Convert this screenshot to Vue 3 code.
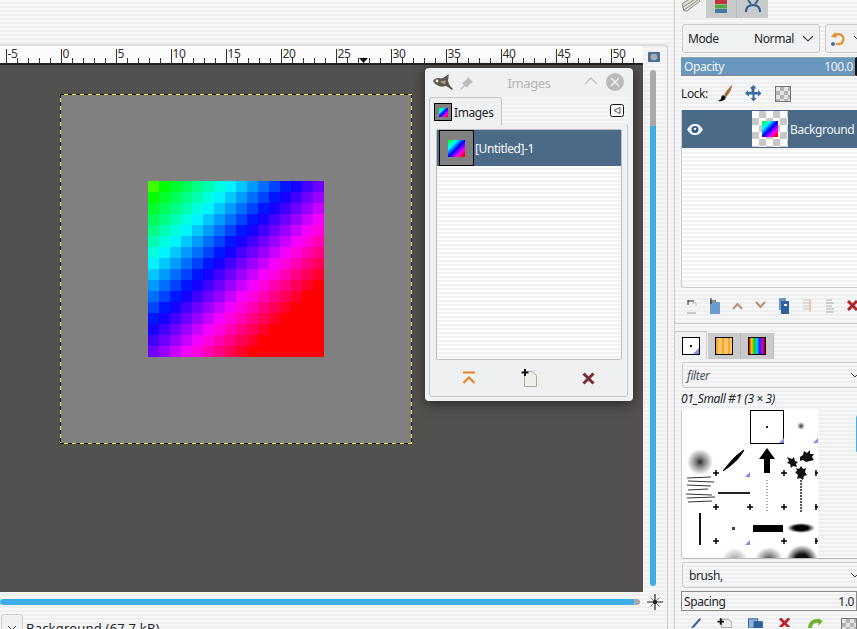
<script setup>
const pixels = []
for (let y = 0; y < 16; y++) {
  for (let x = 0; x < 16; x++) {
    const s = x + y
    const h = s === 0 ? 105 : 120 + (s - 1) * 10.43
    pixels.push(`hsl(${Math.min(h, 360)} 100% 50%)`)
  }
}
const ruler = []
for (let u = -6; u < 53; u++) {
  ruler.push({ u, major: u % 5 === 0 })
}
</script>

<template>
  <div class="app">
    <section class="main">
      <div class="topstrip"></div>
      <div class="work">
        <div class="ruler">
          <div v-for="r in ruler" :key="r.u" class="tick" :class="{ major: r.major }">
            <span v-if="r.major">{{ r.u }}</span>
          </div>
          <svg class="rulermark" width="9" height="5" viewBox="0 0 9 5"><path d="M0 0h9L4.500 5z" fill="#111"/></svg>
        </div>
        <div class="rulercorner">
          <svg width="12" height="10" viewBox="0 0 12 10"><rect width="12" height="10" rx="1" fill="#4d6f94"/><circle cx="6" cy="5" r="3.300" fill="#a9aeb3"/></svg>
        </div>
        <div class="canvas">
          <div class="layer">
            <div class="art">
              <i v-for="(c, i) in pixels" :key="i" :style="{ background: c }"></i>
            </div>
          </div>
        </div>
        <div class="vscroll"><div class="vthumb"></div></div>
        <div class="hscroll"><div class="hthumb"></div></div>
        <div class="nav">
          <svg width="16" height="16" viewBox="0 0 16 16" fill="none" stroke="#222"><path d="M8 0v16M0 8h16" stroke-width="1.200"/><path d="M3.500 3.500l9 9M12.500 3.500l-9 9" stroke="#777"/><path d="M6 8l2-2 2 2-2 2z" fill="#222"/></svg>
        </div>
      </div>
      <div class="status">
        <div class="statusbtn"><svg width="10" height="6" viewBox="0 0 10 6" fill="none" stroke="#444"><path d="M1 1l4 4 4-4"/></svg></div>
        <span>Background (67.7 kB)</span>
      </div>
      <!-- floating dock window -->
      <div class="win">
        <div class="wintitle">
          <svg class="wilber" width="20" height="16" viewBox="0 0 20 16"><path d="M0 7c1-2 3-3 5-3 2 0 3 1 5 0 2-1 4-3 6-4-1 2 0 4-1 6 0 3 2 6 5 9l-1 1c-3-2-5-4-7-4-2 1-4 1-6 0C3 11 1 9 0 7z" fill="#5b5850"/><circle cx="4" cy="7" r="1.400" fill="#eee"/><path d="M7 7c2 0 4 0 6-1l-1 4c-2 0-4-1-5-3z" fill="#b49a70"/></svg>
          <svg class="pin" width="14" height="14" viewBox="0 0 14 14"><path d="M8 1l5 5-2 1-3 3-1 2-2-2-4 4-1-1 4-4-2-2 2-1 3-3z" fill="#bbbcbd"/></svg>
          <span class="wintitletext">Images</span>
          <svg class="winup" width="14" height="8" viewBox="0 0 14 8" fill="none" stroke="#c2c3c4" stroke-width="1.300"><path d="M1 7l6-6 6 6"/></svg>
          <div class="winclose"><svg width="10" height="10" viewBox="0 0 10 10" stroke="#eff0f1" stroke-width="1.500"><path d="M1 1l8 8M9 1l-8 8"/></svg></div>
        </div>
        <div class="wintabs">
          <div class="wintab">
            <div class="thumb tinythumb"><b></b></div>
            <span>Images</span>
          </div>
          <div class="wincfg"><svg width="14" height="13" viewBox="0 0 14 13"><rect x=".5" y=".5" width="13" height="12" rx="2" fill="#fff" stroke="#111"/><path d="M4 6.500L10 3.500v6z" fill="#fff" stroke="#555"/></svg></div>
        </div>
        <div class="winpanel">
          <div class="winlist">
            <div class="imgrow">
              <div class="thumb bigthumb"><b></b></div>
              <span>[Untitled]-1</span>
            </div>
          </div>
          <div class="winbtns">
            <svg width="14" height="14" viewBox="0 0 14 14" fill="none" stroke="#e67e22" stroke-width="2"><path d="M1 1.500h12"/><path d="M1.500 12L7 6.500 12.500 12"/></svg>
            <svg width="16" height="18" viewBox="0 0 16 18"><path d="M3.500 2.500h8l4 4v11h-12z" fill="#eeeeea" stroke="#a9a9a9"/><path d="M4 0v7M0.500 3.500h7" stroke="#111" stroke-width="2"/></svg>
            <svg width="13" height="13" viewBox="0 0 13 13" stroke="#7b2d33" stroke-width="3"><path d="M1.500 1.500l10 10M11.500 1.500l-10 10"/></svg>
          </div>
        </div>
      </div>
    </section>

    <aside class="dock">
      <div class="docktabs">
        <div class="dtab dtab-active">
          <svg width="20" height="18" viewBox="0 0 20 18"><path d="M1 9L15 0l4 6-13 10H3z" fill="#e0e0da" stroke="#8f8f86"/><path d="M2 12l14-9M3 15l14-10" stroke="#8f8f86" fill="none"/></svg>
        </div>
        <div class="dtab dtab-a">
          <svg width="12" height="14" viewBox="0 0 12 14"><rect width="12" height="4" y="0" fill="#c4333a"/><rect width="12" height="4" y="4.500" fill="#56a63d"/><rect width="12" height="4" y="9" fill="#4a7ba8"/></svg>
        </div>
        <div class="dtab dtab-b">
          <svg width="16" height="12" viewBox="0 0 16 12" fill="none" stroke="#2f5e8c" stroke-width="2"><path d="M1 12c0-5 3-7 7-7s7 2 7 7"/><path d="M3 0l3 4M13 0l-3 4"/></svg>
        </div>
      </div>
      <div class="modes">
        <div class="combo mode"><span>Mode</span><span class="modeval">Normal</span><svg width="12" height="7" viewBox="0 0 12 7" fill="none" stroke="#444" stroke-width="1.100"><path d="M1 1l5 5 5-5"/></svg></div>
        <div class="combo undo">
          <svg width="17" height="16" viewBox="0 0 17 16" fill="none"><path d="M4.500 5a5 5 0 1 1 1.500 7.500" stroke="#e8912b" stroke-width="2.400"/><path d="M1 5.500l4.500-4.500 1 6z" fill="#e8912b"/><circle cx="3" cy="13" r="2" fill="#3a6ea5"/></svg>
          <svg width="10" height="7" viewBox="0 0 10 7" fill="none" stroke="#444"><path d="M1 1l4 4 4-4"/></svg>
        </div>
      </div>
      <div class="opacity"><span>Opacity</span><span>100.0</span></div>
      <div class="lock">
        <span>Lock:</span>
        <svg width="16" height="17" viewBox="0 0 16 17"><path d="M15 0c-2 2-6 6-8 10l2 2c3-3 6-8 6-12z" fill="#a56a3a"/><path d="M6 10c-2 1-2 3-2 4l-3 2c3 1 7 0 8-4z" fill="#111"/></svg>
        <svg width="17" height="17" viewBox="0 0 17 17" fill="#3c6a9a"><path d="M8.500 0l3 3.500h-2v3.500h3.500v-2l3.500 3.500-3.500 3v-2h-3.500v3.500h2l-3 3.500-3-3.500h2v-3.500h-3.500v2L0 8.500l3-3.500v2h3.500V3.500h-2z"/></svg>
        <div class="lockchk"></div>
      </div>
      <div class="layers">
        <div class="layerrow">
          <svg width="16" height="11" viewBox="0 0 16 11"><path d="M0 5.500C3 1 5 0 8 0s5 1 8 5.500C13 10 11 11 8 11S3 10 0 5.500z" fill="#f4f6f8"/><circle cx="8" cy="5.500" r="3.500" fill="#2a568c"/><circle cx="8" cy="5" r="1.300" fill="#fff"/></svg>
          <div class="layerthumb"><b></b></div>
          <span>Background</span>
        </div>
      </div>
      <div class="layerbtns">
        <svg width="10" height="16" viewBox="0 0 10 16" fill="none"><path d="M1 2v5M1 3h6" stroke="#222"/><path d="M5 5h4v3" stroke="#bbb"/><path d="M0 15h9" stroke="#999"/></svg>
        <svg width="10" height="16" viewBox="0 0 10 16"><rect y="4" width="10" height="12" fill="#6b9bcb"/><path d="M1 0v6M0 3h6" stroke="#222"/></svg>
        <svg width="11" height="9" viewBox="0 0 11 9" fill="none" stroke="#b49378" stroke-width="2"><path d="M1 8l4.500-5L10 8"/></svg>
        <svg width="11" height="9" viewBox="0 0 11 9" fill="none" stroke="#b49378" stroke-width="2"><path d="M1 1l4.500 5L10 1"/></svg>
        <svg width="10" height="16" viewBox="0 0 10 16"><rect y="0" width="7" height="12" fill="#6b9bcb"/><rect x="2" y="3" width="8" height="13" fill="#2f5f9f"/><rect x="5" y="6" width="3" height="2" fill="#fff"/></svg>
        <svg width="10" height="15" viewBox="0 0 10 15" fill="none" stroke="#c4c4c4"><path d="M1 2h6M1 5h6M1 8h6M1 11h6"/><path d="M8 1v13" stroke="#e59b4a"/></svg>
        <svg width="10" height="15" viewBox="0 0 10 15" fill="none" stroke="#aaa"><path d="M1 2h6M1 5h8M1 8h6M1 11h8M1 14h8"/></svg>
        <svg width="11" height="11" viewBox="0 0 11 11" stroke="#b02028" stroke-width="3"><path d="M1 1l9 9M10 1l-9 9"/></svg>
      </div>
      <div class="brushtabs">
        <div class="btab btab-active"><div class="ticon ticon-brush"></div></div>
        <div class="btab"><div class="ticon ticon-grad"></div></div>
        <div class="btab"><div class="ticon ticon-rainbow"></div></div>
      </div>
      <div class="brushpanel">
        <div class="combo filter"><em>filter</em><svg width="10" height="6" viewBox="0 0 10 6" fill="none" stroke="#444"><path d="M1 1l4 4 4-4"/></svg></div>
        <div class="brushname">01_Small #1 (3 × 3)</div>
        <div class="brushbox">
          <svg class="brushes" width="136" height="148" viewBox="0 0 136 148">
            <defs>
              <radialGradient id="soft"><stop offset="0" stop-color="#222"/><stop offset=".3" stop-color="#777"/><stop offset="1" stop-color="#fff"/></radialGradient>
              <radialGradient id="ell"><stop offset=".5" stop-color="#000"/><stop offset="1" stop-color="#fff"/></radialGradient>
              <radialGradient id="b1"><stop offset="0" stop-color="#999"/><stop offset="1" stop-color="#fff"/></radialGradient>
              <radialGradient id="b2"><stop offset="0" stop-color="#444"/><stop offset="1" stop-color="#fff"/></radialGradient>
              <radialGradient id="b3"><stop offset=".4" stop-color="#111"/><stop offset="1" stop-color="#fff"/></radialGradient>
            </defs>
            <rect width="136" height="148" fill="#fff"/>
            <rect x="68.500" y=".5" width="33" height="33" fill="#fff" stroke="#000"/>
            <rect x="84" y="16" width="2" height="2" fill="#222"/>
            <circle cx="119" cy="16" r="4" fill="url(#soft)"/>
            <circle cx="18" cy="52" r="13" fill="url(#soft)"/>
            <path d="M41 61C48 52 54 45 62 40 57 49 50 55 41 61z" stroke="#000" fill="#000"/>
            <path d="M85 38l8 11h-5v14h-6V49h-5z" fill="#000"/>
            <g fill="#111">
              <path d="M105 47l5 2 2-2 1 4 3 1-2 2 1 3-4-1-2 2-1-4-3-1 2-2z"/>
              <path d="M118 47l3-2 1-4 3 2 3-3 0 4 4 0-2 3 2 3-4 1-4 1-3-2-3 1z"/>
              <path d="M114 58l3 1 2-3 2 3 3-1-1 4 2 3-3 1-1 4-3-2-3 1 1-4-3-3 2-1z"/>
            </g>
            <g stroke="#333" fill="none"><path d="M5 68l24 -1M6 71l26 1M5 75l24 1M6 80l20-1M4 84l26 1M5 88l28-1M6 92l24-1"/></g>
            <rect x="36" y="82" width="32" height="2" fill="#222"/>
            <path d="M85 70v32" stroke="#555" stroke-dasharray="1 2"/>
            <path d="M119 70v32" stroke="#555" stroke-width="2" stroke-dasharray="2 1"/>
            <rect x="17" y="103" width="2" height="32" fill="#111"/>
            <rect x="50" y="117" width="3" height="3" fill="#444"/>
            <rect x="71" y="115" width="30" height="7" fill="#000"/>
            <ellipse cx="119" cy="118" rx="14" ry="5" fill="url(#ell)"/>
            <ellipse cx="53" cy="150" rx="13" ry="12" fill="url(#b1)"/>
            <ellipse cx="87" cy="150" rx="14" ry="13" fill="url(#b2)"/>
            <ellipse cx="120" cy="150" rx="16" ry="15" fill="url(#b3)"/>
            <g fill="#7f8fe8">
              <path d="M102 33V28l-5 5z"/><path d="M136 33V28l-5 5z"/>
              <path d="M68 67v-5l-5 5z"/><path d="M68 135v-5l-5 5z"/>
            </g>
            <g stroke="#000" stroke-width="1.500">
              <path d="M31 63h6M34 60v6"/><path d="M99 63h6M102 60v6"/><path d="M133 63h3M134 60v6"/>
              <path d="M31 97h6M34 94v6"/><path d="M65 97h6M68 94v6"/><path d="M99 97h6M102 94v6"/><path d="M133 97h3M134 94v6"/>
              <path d="M31 131h6M34 128v6"/><path d="M99 131h6M102 128v6"/><path d="M133 131h3M134 128v6"/>
            </g>
          </svg>
          <div class="brushscroll"></div>
        </div>
        <div class="combo filter brushtag"><span>brush,</span><svg width="10" height="6" viewBox="0 0 10 6" fill="none" stroke="#444"><path d="M1 1l4 4 4-4"/></svg></div>
        <div class="spacing"><span>Spacing</span><span>1.0</span></div>
        <div class="bottombtns">
          <svg width="12" height="10" viewBox="0 0 12 10"><path d="M1 10L10 0l2 1-8 9z" fill="#2f5f9f"/></svg>
          <svg width="16" height="10" viewBox="0 0 16 10"><path d="M5 1h7l4 3v6H5z" fill="#eee" stroke="#999"/><path d="M4 0v7M.5 3.500h7" stroke="#111" stroke-width="2"/></svg>
          <svg width="16" height="10" viewBox="0 0 16 10"><rect x=".5" y=".5" width="10" height="10" fill="#8eb2d8" stroke="#2f5f9f"/><rect x="6" y="3" width="10" height="8" fill="#2f5f9f"/></svg>
          <svg width="12" height="9" viewBox="0 0 12 9" stroke="#c0202a" stroke-width="3"><path d="M1 0l10 10M11 0L1 10"/></svg>
          <svg class="greenbtn" width="16" height="10" viewBox="0 0 16 10" fill="none"><path d="M2 11C2 5 6 2 12 3" stroke="#6cb52c" stroke-width="4"/><path d="M11 0l5 3-5 5z" fill="#6cb52c"/></svg>
          <div class="bottomchk"></div>
        </div>
      </div>
    </aside>
  </div>
</template>

<style>
html, body { margin: 0; padding: 0; overflow: hidden; background: #f4f5f5; }
</style>

<style scoped>
* { box-sizing: border-box; }
.app {
  width: 857px; height: 629px; overflow: hidden; display: flex;
  font-family: "Noto Sans", sans-serif; font-size: 12px; letter-spacing: -.4px; color: #232629;
  --stripes: repeating-linear-gradient(180deg, #f7f7f8 0 2px, #eeeff0 2px 4px);
  background: var(--stripes);
}
.main { position: relative; width: 668px; flex: none; display: flex; flex-direction: column; }
.topstrip { height: 44px; flex: none; }
.work {
  display: grid; flex: none; grid-template-columns: 643px 24px; grid-template-rows: 19px 527px 23px;
  border-top: 2px solid #dcdddd; border-right: 1px solid #c9caca; border-radius: 0 4px 0 0;
}
.ruler { position: relative; display: flex; background: #fcfcfc; border-bottom: 2px solid #222; overflow: hidden; }
.tick { position: relative; flex: none; width: 11px; }
.tick:first-child { margin-left: -5.500px; }
.tick::before { content: ""; position: absolute; left: 0; bottom: 0; width: 1px; height: 5px; background: #333; }
.tick.major::before { height: 14px; }
.tick span { position: absolute; left: 2px; top: 1px; font-size: 12px; line-height: 14px; color: #333; }
.rulermark { position: absolute; left: 359px; bottom: 0; }
.rulercorner { display: flex; justify-content: flex-end; padding: 6px 7px 0 0; }
.canvas { background: #52514f; padding: 29px 0 0 60px; overflow: hidden; }
.layer {
  width: 352px; height: 350px; display: flex; align-items: center; justify-content: center;
  background:
    repeating-linear-gradient(90deg, #111 0 4px, #e6e62a 4px 8px) 0 0 / 100% 1px no-repeat,
    repeating-linear-gradient(90deg, #111 0 4px, #e6e62a 4px 8px) 0 100% / 100% 1px no-repeat,
    repeating-linear-gradient(180deg, #111 0 4px, #e6e62a 4px 8px) 0 0 / 1px 100% no-repeat,
    repeating-linear-gradient(180deg, #111 0 4px, #e6e62a 4px 8px) 100% 0 / 1px 100% no-repeat,
    #808080;
}
.art { display: grid; grid-template-columns: repeat(16, 11px); grid-auto-rows: 11px; }
.art i { display: block; }
.vscroll { padding: 5px 0 0 7px; }
.vthumb { width: 6px; height: 516px; border-radius: 3px; background: linear-gradient(180deg, #a9a9a9 0 56px, #3daee9 56px); }
.hscroll { padding: 7px 3px 0 0; }
.hthumb { height: 6px; border-radius: 3px; background: linear-gradient(90deg, #3daee9 0 634px, #a9a9a9 634px); }
.nav { padding: 2px 0 0 4px; }
.status { display: flex; flex: none; align-items: flex-start; gap: 3px; padding: 0 0 0 1px; height: 14px; font-size: 13px; line-height: 14px; border-right: 1px solid #c9caca; }
.statusbtn { width: 22px; height: 20px; flex: none; border: 1px solid #cfcfcf; border-radius: 3px; background: #eff0f1; display: flex; justify-content: center; padding-top: 10px; margin-top: -1px; }
.status span { margin-top: 6px; letter-spacing: .2px; }

.win {
  position: absolute; left: 425px; top: 68px; width: 208px; height: 333px;
  background: #eff0f1; border-radius: 4px; box-shadow: 0 2px 14px rgba(0,0,0,.55);
  display: flex; flex-direction: column; padding: 0 4px;
}
.wintitle { position: relative; height: 29px; display: flex; align-items: center; justify-content: center; flex: none; }
.wintitletext { color: #b3b5b6; font-size: 13px; }
.wilber { position: absolute; left: 4px; top: 6px; }
.pin { position: absolute; left: 31px; top: 8px; }
.winup { position: absolute; left: 155px; top: 9px; }
.winclose { position: absolute; left: 177px; top: 5px; width: 18px; height: 18px; border-radius: 50%; background: #b9babb; display: flex; align-items: center; justify-content: center; }
.wintabs { position: relative; display: flex; height: 28px; background: var(--stripes); margin-right: 1px; flex: none; }
.wintab { width: 73px; height: 28px; background: #eff0f1; border: 1px solid #c6c7c8; border-bottom: none; border-radius: 3px 3px 0 0; display: flex; align-items: center; gap: 2px; padding: 1px 0 0 4px; z-index: 1; }
.wintab span { color: #232629; }
.wincfg { position: absolute; left: 181px; top: 7px; display: flex; }
.thumb { background: #808080; border: 1px solid #000; display: flex; align-items: center; justify-content: center; flex: none; }
.thumb b, .layerthumb b { display: block; background: linear-gradient(135deg, #00ff00, #00ffff 27%, #0000ff 50%, #ff00ff 75%, #ff0000 90%); }
.tinythumb { width: 18px; height: 18px; }
.tinythumb b { width: 9px; height: 9px; }
.bigthumb { width: 35px; height: 36px; }
.bigthumb b { width: 17px; height: 17px; }
.winpanel { flex: 1; margin-top: -1px; margin-right: 1px; margin-bottom: 4px; border: 1px solid #c6c7c8; border-radius: 0 3px 3px 3px; padding: 4px 5px 0 6px; display: flex; flex-direction: column; }
.winlist { height: 231px; flex: none; border: 1px solid #bcbdbe; border-radius: 2px; background: repeating-linear-gradient(180deg, #fff 0 2px, #f2f2f3 2px 4px); }
.imgrow { height: 36px; background: #4b6a88; color: #fcfcfc; display: flex; align-items: center; gap: 1px; padding-left: 2px; }
.winbtns { display: flex; justify-content: space-around; align-items: center; flex: 1; padding: 0 4px 0 3px; }

.dock { position: relative; flex: 1; min-width: 0; margin-left: 6px; border-left: 1px solid #cfd0d1; }
.docktabs { display: flex; height: 19px; padding-left: 6px; align-items: flex-start; }
.dtab { height: 18px; display: flex; align-items: flex-start; justify-content: center; background: #c9cacb; }
.dtab-active { width: 25px; background: #eff0f1; justify-content: flex-start; }
.dtab-active svg { margin-top: -5px; }
.dtab-a { width: 31px; border-right: 1px solid #b8b9ba; }
.dtab-b { width: 31px; }
.modes { display: flex; gap: 5px; padding: 5px 0 0 7px; margin-bottom: 4px; }
.combo { background: #f0f1f2; border: 1px solid #c9caca; border-radius: 3px; display: flex; align-items: center; }
.mode { width: 138px; height: 29px; flex: none; padding: 0 5px; }
.modeval { margin-left: auto; margin-right: 8px; }
.undo { flex: none; width: 40px; height: 29px; padding-left: 4px; gap: 6px; }
.opacity { margin-left: 6px; height: 19px; background: #6a97bd; color: #f2f5f7; display: flex; justify-content: space-between; padding: 0 2px 0 3px; line-height: 18px; border-top: 1px solid #8aa; border-right: 2px solid #111; border-bottom: 1px solid #888; }
.lock { display: flex; align-items: center; gap: 12px; height: 34px; padding: 1px 0 0 6px; }
.lock span { margin-right: -3px; }
.lockchk, .bottomchk { width: 16px; height: 16px; border: 1px solid #777; background: repeating-conic-gradient(#b4b4b4 0 25%, #e4e4e4 0 50%) 0 0 / 8px 8px; margin-left: 1px; }
.layers { margin-left: 6px; height: 178px; border-left: 1px solid #c9caca; border-bottom: 1px solid #c9caca; border-radius: 0 0 0 3px; background: repeating-linear-gradient(180deg, #fff 0 2px, #f2f2f3 2px 4px); }
.layerrow { height: 38px; background: #4b6a88; color: #f2f5f7; display: flex; align-items: center; padding-left: 5px; }
.layerthumb { width: 36px; height: 36px; margin-left: 49px; margin-right: 2px; flex: none; display: flex; align-items: center; justify-content: center; background: repeating-conic-gradient(#c8c8c8 0 25%, #fff 0 50%) 0 0 / 14px 14px; }
.layerthumb b { width: 16px; height: 16px; }
.layerbtns { height: 36px; display: grid; grid-template-columns: repeat(8, 23px); justify-items: center; align-items: center; padding-left: 5px; border-bottom: 1px solid #c9caca; border-left: 1px solid #c9caca; border-radius: 0 0 0 3px; margin-left: -1px; }
.brushtabs { display: flex; height: 28px; margin-top: 7px; margin-left: -1px; align-items: flex-end; }
.btab { width: 33px; height: 26px; display: flex; justify-content: center; align-items: center; background: #c9cacb; border-right: 1px solid #b8b9ba; }
.btab-active { height: 28px; background: #eff0f1; border: 1px solid #c9caca; border-bottom: none; border-radius: 3px 3px 0 0; margin-right: 1px; }
.ticon { width: 18px; height: 18px; border: 1px solid #000; position: relative; }
.ticon-brush { background: #fff; }
.ticon-brush::before { content: ""; position: absolute; left: 7px; top: 7px; width: 2px; height: 2px; background: #111; }
.ticon-brush::after { content: ""; position: absolute; right: 0; bottom: 0; border: 3px solid transparent; border-right-color: #7f8fe8; border-bottom-color: #7f8fe8; }
.ticon-grad { background: repeating-linear-gradient(90deg, #f5a623 0 2px, #ffc46e 2px 6px); }
.ticon-rainbow { background: linear-gradient(90deg, #c00, #ffd000, #00d000, #00d0ff, #2020ff, #d000d0, #900); }
.brushpanel { margin-left: 6px; display: flex; flex-direction: column; }
.filter { height: 26px; margin: 3px -4px 0 1px; padding-left: 4px; justify-content: space-between; background: var(--stripes); color: #444; }
.filter em { color: #4a5560; }
.brushname { font-style: italic; line-height: 17px; padding: 2px 0 0 0; height: 22px; color: #232629; }
.brushbox { height: 149px; display: flex; border-left: 1px solid #c9caca; border-bottom: 1px solid #bbb; border-radius: 0 0 0 3px; overflow: hidden; flex: none; width: 176px; }
.brushes { flex: none; display: block; }
.brushscroll { width: 6px; height: 38px; margin: 5px 0 0 38px; background: #3daee9; border-radius: 3px; flex: none; }
.brushtag { margin-top: 3px; color: #232629; height: 26px; }
.brushtag span { margin-left: 2px; }
.spacing { margin: 3px 0 0 0; height: 20px; border: 1px solid #8c8c8c; display: flex; justify-content: space-between; padding: 0 2px; line-height: 19px; }
.bottombtns { display: flex; gap: 16px; padding: 7px 0 0 9px; align-items: flex-start; }
.greenbtn { margin-left: 2px; }
.bottomchk { width: 16px; height: 16px; margin: 0 0 0 2px; flex: none; }
</style>
